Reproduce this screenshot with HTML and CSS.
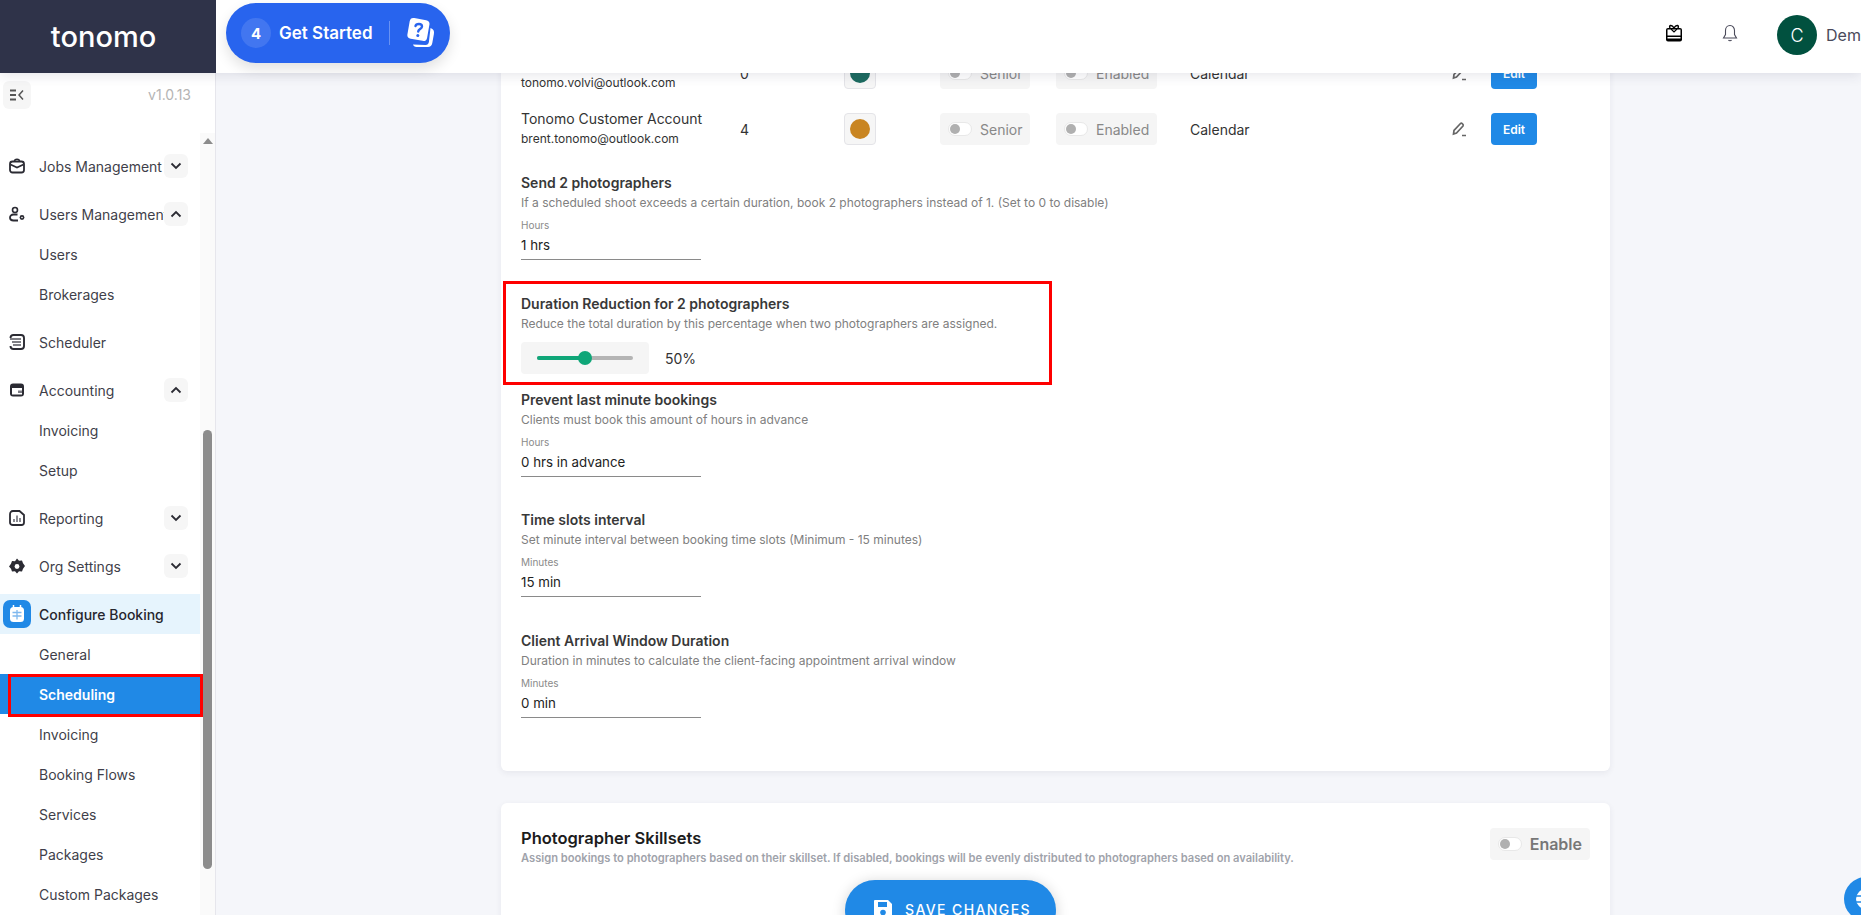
FILE: index.html
```html
<!DOCTYPE html>
<html lang="en">
<head>
  <meta charset="UTF-8">
  <meta name="viewport" content="width=device-width, initial-scale=1.0">
  <title>Tonomo - Scheduling</title>
  <link rel="stylesheet" href="styles.css">
</head>
<body>
  <div class="app">
    <header class="topbar">
      <div class="brand">tonomo</div>
      <div class="get-started">
        <span class="step-count">4</span>
        <span class="get-started-label">Get Started</span>
        <span class="get-started-divider"></span>
        <svg class="help-icon" width="30" height="30" viewBox="2 1 27 30">
          <path d="M25 11c3 1 4 3 3.400 6l-1.600 9c-.5 3-2.500 4.500-5.500 4H11c-2 0-3-1-3.500-2.500L20 28c2 0 3-1 3.400-3z" fill="#fff"/>
          <rect x="3" y="2" width="20" height="21" rx="4" transform="rotate(10 13 12)" fill="#fff"/>
          <path d="M10 9c.5-2.500 6.500-3 6.500.5 0 2.500-3.500 2.500-3.800 5" fill="none" stroke="#2864ee" stroke-width="2.400" stroke-linecap="round"/>
          <circle cx="12.300" cy="18.500" r="1.500" fill="#2864ee"/>
        </svg>
      </div>
      <div class="topbar-right">
        <svg class="gift-icon" width="18" height="18" viewBox="0 0 18 18">
          <path d="M5 4C3.500 1 7 .5 9 4c2-3.500 5.500-3 4 0" fill="none" stroke="#000" stroke-width="1.500"/>
          <rect x="1" y="4" width="16" height="13.500" rx="2" fill="#000"/>
          <rect x="2.500" y="5.500" width="13" height="6" fill="#fff"/>
          <rect x="2.500" y="13" width="13" height="1.500" fill="#fff"/>
          <path d="M6 5l3 3 3-3" fill="none" stroke="#000" stroke-width="1.200"/>
        </svg>
        <svg class="bell-icon" width="16" height="18" viewBox="0 0 16 18">
          <path d="M8 1.500c-3 0-4.500 2.500-4.500 5v4L1.500 14h13l-2-3.500v-4c0-2.500-1.500-5-4.500-5zM6.500 16c.5 1 2.500 1 3 0" fill="none" stroke="#4a4a5a" stroke-width="1.100"/>
        </svg>
        <div class="user">
          <span class="avatar">C</span>
          <span class="user-name">Demo Company</span>
        </div>
      </div>
    </header>

    <div class="workspace">
      <aside class="sidebar">
        <div class="sidebar-top">
          <button class="collapse-btn">
            <svg width="14" height="12" viewBox="0 0 14 12">
              <path d="M0 1.500h6M0 6h6M0 10.500h6" stroke="#555" stroke-width="1.800" fill="none"/>
              <path d="M13 1.500L9 6l4 4.500" stroke="#555" stroke-width="1.500" fill="none"/>
            </svg>
          </button>
          <span class="version">v1.0.13</span>
        </div>
        <div class="nav-area">
          <nav class="nav">
            <div class="nav-item parent">
              <svg class="nav-icon" width="16" height="16" viewBox="0 0 16 16">
                <rect x="1" y="3.500" width="14" height="11" rx="2.500" fill="none" stroke="#2b2b33" stroke-width="1.800"/>
                <path d="M5.500 3.500c0-3 5-3 5 0M1.500 6.500L8 9.500l6.500-3" fill="none" stroke="#2b2b33" stroke-width="1.600"/>
              </svg>
              <span class="nav-label">Jobs Management</span>
              <span class="chevron-btn"><svg width="12" height="8" viewBox="0 0 12 8"><path d="M1.500 1.500L6 6l4.500-4.500" fill="none" stroke="#2b2b33" stroke-width="1.800"/></svg></span>
            </div>
            <div class="nav-item parent">
              <svg class="nav-icon" width="16" height="16" viewBox="0 0 16 16">
                <circle cx="6" cy="4" r="2.500" fill="none" stroke="#2b2b33" stroke-width="1.600"/>
                <path d="M8.500 8.500H4.500C2.500 8.500 1 9.800 1 11.800s1.500 2.700 3.500 2.700H9" fill="none" stroke="#2b2b33" stroke-width="1.800"/>
                <circle cx="13" cy="11.500" r="2.400" fill="#2b2b33"/>
                <circle cx="13" cy="11.500" r=".8" fill="#fff"/>
              </svg>
              <span class="nav-label">Users Management</span>
              <span class="chevron-btn"><svg width="12" height="8" viewBox="0 0 12 8"><path d="M1.500 6.500L6 2l4.500 4.500" fill="none" stroke="#2b2b33" stroke-width="1.800"/></svg></span>
            </div>
            <div class="nav-item sub">Users</div>
            <div class="nav-item sub last">Brokerages</div>
            <div class="nav-item parent">
              <svg class="nav-icon" width="16" height="16" viewBox="0 0 16 16">
                <path d="M1.500 4c0-2 1-3 3-3h7.500c2 0 3 1 3 3v8c0 2-1 3-3 3H4.500c-2 0-3-1-3-3" fill="none" stroke="#2b2b33" stroke-width="1.900"/>
                <path d="M1 5h11M3 8h9M4 11h8" stroke="#55555d" stroke-width="1.300"/>
              </svg>
              <span class="nav-label">Scheduler</span>
            </div>
            <div class="nav-item parent">
              <svg class="nav-icon" width="16" height="16" viewBox="0 0 16 16">
                <rect x="1" y="1.500" width="14" height="13" rx="3" fill="#2b2b33"/>
                <rect x="3" y="6" width="10" height="6.500" fill="#fff"/>
                <rect x="9" y="8.500" width="4" height="2.500" fill="#7a7a82"/>
              </svg>
              <span class="nav-label">Accounting</span>
              <span class="chevron-btn"><svg width="12" height="8" viewBox="0 0 12 8"><path d="M1.500 6.500L6 2l4.500 4.500" fill="none" stroke="#2b2b33" stroke-width="1.800"/></svg></span>
            </div>
            <div class="nav-item sub">Invoicing</div>
            <div class="nav-item sub last">Setup</div>
            <div class="nav-item parent">
              <svg class="nav-icon" width="16" height="16" viewBox="0 0 16 16">
                <path d="M4 1h6.500L15 5v7.500c0 1.500-1 2.500-2.500 2.500h-8.500C2 15 1 14 1 12.500v-8C1 2.500 2 1 4 1z" fill="none" stroke="#2b2b33" stroke-width="1.800"/>
                <path d="M5 12V9M8 12V5.500M11 12V8" stroke="#77777f" stroke-width="1.700"/>
              </svg>
              <span class="nav-label">Reporting</span>
              <span class="chevron-btn"><svg width="12" height="8" viewBox="0 0 12 8"><path d="M1.500 1.500L6 6l4.500-4.500" fill="none" stroke="#2b2b33" stroke-width="1.800"/></svg></span>
            </div>
            <div class="nav-item parent">
              <svg class="nav-icon" width="16" height="16" viewBox="0 0 16 16">
                <path d="M8 .5l2 2.300 3-.4 1 2.900 2 2.700-2 2.700-1 2.900-3-.4-2 2.300-2-2.300-3 .4-1-2.900L0 8.500l2-2.700 1-2.900 3 .4z" fill="#2b2b33"/>
                <circle cx="8" cy="8.500" r="2.400" fill="#fff"/>
              </svg>
              <span class="nav-label">Org Settings</span>
              <span class="chevron-btn"><svg width="12" height="8" viewBox="0 0 12 8"><path d="M1.500 1.500L6 6l4.500-4.500" fill="none" stroke="#2b2b33" stroke-width="1.800"/></svg></span>
            </div>
            <div class="nav-item parent current">
              <span class="current-icon">
                <svg width="16" height="18" viewBox="0 0 16 18">
                  <rect x="1" y="2" width="14" height="15" rx="3.500" fill="#fff"/>
                  <path d="M4.500 0v3M11.500 0v3" stroke="#fff" stroke-width="1.500"/>
                  <path d="M3.500 7.500h9M8 5v9.500M3.500 11h9" stroke="#7fb8ee" stroke-width="1.300"/>
                </svg>
              </span>
              <span class="nav-label">Configure Booking</span>
            </div>
            <div class="nav-item sub">General</div>
            <div class="nav-item sub active">Scheduling</div>
            <div class="nav-item sub">Invoicing</div>
            <div class="nav-item sub">Booking Flows</div>
            <div class="nav-item sub">Services</div>
            <div class="nav-item sub">Packages</div>
            <div class="nav-item sub">Custom Packages</div>
          </nav>
          <div class="scrollbar">
            <span class="scroll-arrow"></span>
            <span class="scroll-thumb"></span>
          </div>
        </div>
        <div class="highlight highlight-nav"></div>
      </aside>

      <main class="main">
        <div class="content">
          <section class="card">
            <div class="photographer-row">
              <div>
                <div class="photographer-name">Tonomo Volvi</div>
                <div class="photographer-email">tonomo.volvi@outlook.com</div>
              </div>
              <div class="cell-text">0</div>
              <div class="swatch"><span class="swatch-dot dot-teal"></span></div>
              <div class="toggle-chip"><span class="toggle"></span>Senior</div>
              <div class="toggle-chip"><span class="toggle"></span>Enabled</div>
              <div class="cell-text">Calendar</div>
              <svg width="16" height="16" viewBox="0 0 16 16"><path d="M2.500 13l.5-3.500 6.500-7c1-1 3.500 1 2.500 2.500l-6.500 7zM11 14.500h4" fill="none" stroke="#666" stroke-width="1.700"/></svg>
              <button class="edit-btn">Edit</button>
            </div>
            <div class="photographer-row">
              <div>
                <div class="photographer-name">Tonomo Customer Account</div>
                <div class="photographer-email">brent.tonomo@outlook.com</div>
              </div>
              <div class="cell-text">4</div>
              <div class="swatch"><span class="swatch-dot dot-amber"></span></div>
              <div class="toggle-chip"><span class="toggle"></span>Senior</div>
              <div class="toggle-chip"><span class="toggle"></span>Enabled</div>
              <div class="cell-text">Calendar</div>
              <svg width="16" height="16" viewBox="0 0 16 16"><path d="M2.500 13l.5-3.500 6.500-7c1-1 3.500 1 2.500 2.500l-6.500 7zM11 14.500h4" fill="none" stroke="#666" stroke-width="1.700"/></svg>
              <button class="edit-btn">Edit</button>
            </div>

            <div class="setting first">
              <h3>Send 2 photographers</h3>
              <p>If a scheduled shoot exceeds a certain duration, book 2 photographers instead of 1. (Set to 0 to disable)</p>
              <div class="field">
                <label>Hours</label>
                <div class="field-value">1 hrs</div>
              </div>
            </div>

            <div class="setting slider-setting">
              <h3>Duration Reduction for 2 photographers</h3>
              <p>Reduce the total duration by this percentage when two photographers are assigned.</p>
              <div class="slider-row">
                <div class="slider-chip">
                  <div class="slider-track">
                    <span class="slider-fill" style="width: 50%"></span>
                    <span class="slider-thumb" style="left: 50%"></span>
                  </div>
                </div>
                <span class="slider-value">50%</span>
              </div>
            </div>

            <div class="setting">
              <h3>Prevent last minute bookings</h3>
              <p>Clients must book this amount of hours in advance</p>
              <div class="field">
                <label>Hours</label>
                <div class="field-value">0 hrs in advance</div>
              </div>
            </div>

            <div class="setting time-slots">
              <h3>Time slots interval</h3>
              <p>Set minute interval between booking time slots (Minimum - 15 minutes)</p>
              <div class="field">
                <label>Minutes</label>
                <div class="field-value">15 min</div>
              </div>
            </div>

            <div class="setting">
              <h3>Client Arrival Window Duration</h3>
              <p>Duration in minutes to calculate the client-facing appointment arrival window</p>
              <div class="field">
                <label>Minutes</label>
                <div class="field-value">0 min</div>
              </div>
            </div>
          </section>

          <section class="card skillsets">
            <div>
              <h2>Photographer Skillsets</h2>
              <p>Assign bookings to photographers based on their skillset. If disabled, bookings will be evenly distributed to photographers based on availability.</p>
            </div>
            <div class="toggle-chip enable-chip"><span class="toggle"></span>Enable</div>
          </section>
        </div>

        <div class="highlight highlight-setting"></div>

        <button class="save-btn">
          <svg width="20" height="20" viewBox="0 0 20 20">
            <path d="M2 1h13l4 4v12c0 1-1 2-2 2H3c-1 0-2-1-2-2V2c0-.5.5-1 1-1z" fill="#fff"/>
            <rect x="5" y="3" width="9" height="5" fill="#2089e6"/>
            <circle cx="10" cy="13.500" r="2.800" fill="#2089e6"/>
          </svg>
          SAVE CHANGES
        </button>

        <div class="support-btn">
          <svg width="24" height="24" viewBox="0 0 24 24">
            <circle cx="12" cy="12" r="10" fill="#fff"/>
            <path d="M2 9h20M2 15h20M12 2v20" stroke="#2089e6" stroke-width="1.600"/>
          </svg>
        </div>
      </main>
    </div>
  </div>
</body>
</html>
```

FILE: styles.css
```css
* {
  box-sizing: border-box;
}
body {
  margin: 0;
  height: 100vh;
  overflow: hidden;
  font-family: 'Inter', 'Liberation Sans', sans-serif;
  color: #333;
  background-color: #f5f6fa;
}
.app {
  height: 100vh;
  display: flex;
  flex-direction: column;
}

/* top bar */
.topbar {
  height: 73px;
  flex-shrink: 0;
  display: flex;
  align-items: flex-start;
  background: #fff;
  box-shadow: 0 2px 12px rgba(40, 44, 70, 0.12);
  position: relative;
  z-index: 5;
}
.brand {
  width: 216px;
  height: 73px;
  background-color: #2f3349;
  color: #fff;
  font-size: 29px;
  font-weight: 500;
  display: flex;
  align-items: center;
  justify-content: center;
  padding-right: 9px;
}
.get-started {
  margin: 3px 0 0 10px;
  width: 224px;
  height: 60px;
  border-radius: 30px;
  background-color: #2864ee;
  box-shadow: 0 6px 14px rgba(0, 0, 0, 0.12);
  display: flex;
  align-items: center;
  padding-left: 15px;
  color: #fff;
}
.step-count {
  width: 30px;
  height: 30px;
  border-radius: 50%;
  background: rgba(255, 255, 255, 0.12);
  display: flex;
  align-items: center;
  justify-content: center;
  font-size: 15px;
  font-weight: 700;
}
.get-started-label {
  margin-left: 8px;
  font-size: 17px;
  font-weight: 600;
  white-space: nowrap;
}
.get-started-divider {
  width: 1px;
  height: 24px;
  margin-left: 16px;
  background: rgba(255, 255, 255, 0.3);
}
.help-icon {
  margin-left: 16px;
}
.topbar-right {
  margin-left: auto;
  height: 73px;
  display: flex;
  align-items: center;
  padding-bottom: 3px;
}
.gift-icon,
.bell-icon {
  margin-bottom: 4px;
}
.bell-icon {
  margin-left: 39px;
}
.user {
  width: 84px;
  margin-left: 39px;
  display: flex;
  align-items: center;
  overflow: hidden;
  white-space: nowrap;
}
.avatar {
  width: 40px;
  height: 40px;
  flex-shrink: 0;
  border-radius: 50%;
  background-color: #01513f;
  color: #fff;
  font-size: 18px;
  font-weight: 300;
  display: flex;
  align-items: center;
  justify-content: center;
}
.user-name {
  margin-left: 9px;
  font-size: 16px;
  color: #4a4a5a;
}

/* sidebar */
.workspace {
  flex: 1;
  min-height: 0;
  display: flex;
}
.sidebar {
  width: 216px;
  flex-shrink: 0;
  background: #fff;
  border-right: 1px solid #e6e6ec;
  display: flex;
  flex-direction: column;
  position: relative;
}
.sidebar-top {
  height: 60px;
  flex-shrink: 0;
  display: flex;
  justify-content: space-between;
  padding: 8px 24px 0 3px;
}
.collapse-btn {
  width: 28px;
  height: 28px;
  padding: 0;
  border: none;
  border-radius: 6px;
  background-color: #f6f6f6;
  display: flex;
  align-items: center;
  justify-content: center;
}
.version {
  font-size: 14px;
  line-height: 28px;
  color: #b4b4b4;
}
.nav-area {
  flex: 1;
  min-height: 0;
  display: flex;
}
.nav {
  width: 200px;
  flex-shrink: 0;
  padding-top: 13px;
  overflow: hidden;
}
.nav-item {
  height: 40px;
  display: flex;
  align-items: center;
  font-size: 14px;
  color: #3f3f4a;
}
.nav-item.parent {
  padding-left: 9px;
  margin-top: 8px;
}
.nav-item.parent:first-child {
  margin-top: 0;
}
.nav-item.sub {
  padding-left: 39px;
}
.nav-icon {
  flex-shrink: 0;
}
.nav-label {
  width: 125px;
  margin-left: 14px;
  overflow: hidden;
  white-space: nowrap;
}
.chevron-btn {
  width: 24px;
  height: 24px;
  flex-shrink: 0;
  border-radius: 6px;
  background-color: #f6f6f6;
  display: flex;
  align-items: center;
  justify-content: center;
}
.nav-item.current {
  padding-left: 3px;
  background-color: #e6f4fd;
  color: #26262e;
  font-weight: 500;
}
.current-icon {
  width: 28px;
  height: 28px;
  flex-shrink: 0;
  border-radius: 7px;
  background-color: #2089e6;
  display: flex;
  align-items: center;
  justify-content: center;
}
.nav-item.current .nav-label {
  margin-left: 8px;
  width: 150px;
}
.nav-item.active {
  background-color: #2089e6;
  color: #fff;
  font-weight: 600;
}
.scrollbar {
  width: 15px;
  background-color: #fafafa;
  display: flex;
  flex-direction: column;
  align-items: center;
}
.scroll-arrow {
  margin-top: 5px;
  border-left: 5px solid transparent;
  border-right: 5px solid transparent;
  border-bottom: 6px solid #8c8c8c;
}
.scroll-thumb {
  width: 9px;
  height: 439px;
  margin-top: 286px;
  border-radius: 5px;
  background-color: #8c8c8c;
}
.highlight {
  position: absolute;
  border: 3px solid #fe0000;
  pointer-events: none;
  z-index: 3;
}
.highlight-nav {
  left: 8px;
  top: 601px;
  width: 195px;
  height: 43px;
}

/* main content */
.main {
  flex: 1;
  min-width: 0;
  position: relative;
  overflow: hidden;
}
.content {
  margin-top: -16px;
  margin-left: 285px;
  width: 1109px;
}
.card {
  background: #fff;
  border-radius: 6px;
  padding: 0 20px 53px;
  box-shadow: 0 2px 6px rgba(40, 44, 70, 0.07);
}
.photographer-row {
  height: 32px;
  margin-bottom: 24px;
  display: grid;
  grid-template-columns: 219px 104px 96px 116px 134px 261px 40px 46px;
  grid-template-rows: 32px;
  align-items: center;
}
.photographer-row + .photographer-row {
  margin-bottom: 0;
}
.photographer-name {
  font-size: 14px;
  line-height: 20px;
  color: #333;
  white-space: nowrap;
}
.photographer-email {
  font-size: 12px;
  line-height: 20px;
  color: #333;
}
.cell-text {
  font-size: 14px;
  color: #333;
}
.swatch {
  width: 32px;
  height: 32px;
  border: 1px solid #e4e4e8;
  border-radius: 4px;
  background-color: #f6f6f6;
  display: flex;
  align-items: center;
  justify-content: center;
}
.swatch-dot {
  width: 20px;
  height: 20px;
  border-radius: 50%;
}
.dot-teal {
  background-color: #1c6b60;
}
.dot-amber {
  background-color: #c98521;
}
.toggle-chip {
  width: fit-content;
  height: 32px;
  padding: 0 8px;
  border-radius: 4px;
  background-color: #f5f5f5;
  display: flex;
  align-items: center;
  font-size: 14px;
  color: #888;
}
.toggle {
  width: 24px;
  height: 14px;
  margin-right: 8px;
  border: 1px solid #e8e8e8;
  border-radius: 7px;
  background: #fff;
  position: relative;
}
.toggle::before {
  content: "";
  position: absolute;
  left: 1px;
  top: 1px;
  width: 10px;
  height: 10px;
  border-radius: 50%;
  background-color: #b0b0b0;
}
.edit-btn {
  width: 46px;
  height: 32px;
  padding: 0;
  border: none;
  border-radius: 4px;
  background-color: #2089e6;
  color: #fff;
  font-family: inherit;
  font-size: 12px;
  font-weight: 600;
}
.setting {
  margin-top: 34px;
}
.setting.first {
  margin-top: 28px;
}
.setting.time-slots {
  margin-top: 33px;
}
.setting h3 {
  margin: 0;
  font-size: 14px;
  line-height: 20px;
  font-weight: 600;
  color: #383838;
}
.setting p {
  margin: 0;
  font-size: 12px;
  line-height: 20px;
  color: #808080;
}
.field {
  width: 180px;
  margin-top: 6px;
  padding-bottom: 4px;
  border-bottom: 1px solid #8a8a8a;
}
.field label {
  display: block;
  font-size: 10px;
  line-height: 12px;
  color: #8a8a8a;
}
.field-value {
  margin-top: 4px;
  font-size: 13.300px;
  line-height: 20px;
  color: #222;
}
.slider-row {
  margin-top: 8px;
  display: flex;
  align-items: center;
}
.slider-chip {
  width: 128px;
  height: 32px;
  padding: 0 16px;
  border-radius: 4px;
  background-color: #f5f5f5;
  display: flex;
  align-items: center;
}
.slider-track {
  width: 100%;
  height: 4px;
  border-radius: 2px;
  background-color: #b4b4b4;
  position: relative;
}
.slider-fill {
  display: block;
  height: 4px;
  border-radius: 2px;
  background-color: #0fa678;
}
.slider-thumb {
  position: absolute;
  top: -5px;
  width: 14px;
  height: 14px;
  margin-left: -7px;
  border-radius: 50%;
  background-color: #0fa678;
}
.slider-value {
  margin-left: 16px;
  font-size: 14px;
  color: #333;
}
.slider-setting + .setting {
  margin-top: 16px;
}
.skillsets {
  margin-top: 32px;
  padding: 25px 20px 60px;
  display: flex;
  justify-content: space-between;
  align-items: flex-start;
}
.skillsets h2 {
  margin: 0;
  font-size: 16.500px;
  line-height: 20px;
  font-weight: 600;
  color: #1c1c1c;
}
.skillsets p {
  margin: 0;
  font-size: 11.150px;
  line-height: 20px;
  font-weight: 600;
  color: #9fa3ab;
}
.enable-chip {
  width: 100px;
  font-size: 16px;
  font-weight: 600;
  color: #777;
}
.highlight-setting {
  left: 287px;
  top: 208px;
  width: 549px;
  height: 104px;
}
.save-btn {
  position: absolute;
  left: 629px;
  top: 807px;
  width: 211px;
  height: 60px;
  padding: 0 0 2px 28px;
  border: none;
  border-radius: 30px;
  background-color: #2089e6;
  color: #fff;
  box-shadow: 0 2px 14px rgba(0, 0, 0, 0.18);
  font-family: inherit;
  font-size: 14px;
  font-weight: 500;
  letter-spacing: 1.400px;
  display: flex;
  align-items: center;
  gap: 12px;
}
.support-btn {
  position: absolute;
  left: 1628px;
  top: 804px;
  width: 44px;
  height: 44px;
  border-radius: 50%;
  background-color: #2089e6;
  display: flex;
  align-items: center;
  justify-content: center;
}
```
